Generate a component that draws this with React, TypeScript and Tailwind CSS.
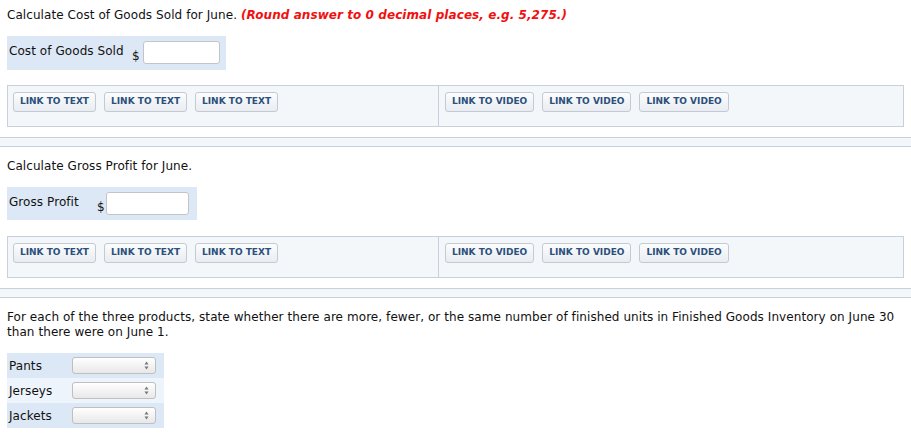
const font = { fontFamily: '"DejaVu Sans", Verdana, sans-serif' };

function LinkButton({ label }: { label: string }) {
  return (
    <div className="h-[20px] px-[6px] flex items-center rounded-[3px] border border-[#c3cad3] bg-gradient-to-b from-[#fbfcfd] to-[#e9edf1] text-[9px] tracking-normal font-bold text-[#2c4f7c] whitespace-nowrap">
      {label}
    </div>
  );
}

function LinksPanel({ top }: { top: string }) {
  return (
    <div className={`${top} h-[42px] w-[897px] flex border border-[#c7d0dc] bg-[#f4f7fa]`}>
      <div className="w-[431px] border-r border-[#c7d0dc] pl-[5px] pt-[6px] flex gap-[8px] items-start">
        <LinkButton label="LINK TO TEXT" />
        <LinkButton label="LINK TO TEXT" />
        <LinkButton label="LINK TO TEXT" />
      </div>
      <div className="flex-1 pl-[6px] pt-[6px] flex gap-[8px] items-start">
        <LinkButton label="LINK TO VIDEO" />
        <LinkButton label="LINK TO VIDEO" />
        <LinkButton label="LINK TO VIDEO" />
      </div>
    </div>
  );
}

function Separator() {
  return <div className="mt-[10px] h-[10px] w-full border-y border-[#c7d0dc] bg-[#f4f7fa]" />;
}

function Select() {
  return (
    <div className="h-[17px] w-[84px] rounded-[3px] border border-[#bfbfbf] bg-gradient-to-b from-white to-[#e8e8e8] flex items-center justify-end pr-[6px]">
      <svg width="5" height="9" viewBox="0 0 5 9">
        <path d="M2.5 0.5 L4.5 3.5 L0.5 3.5 Z" fill="#777" />
        <path d="M2.5 8.5 L4.5 5.5 L0.5 5.5 Z" fill="#777" />
      </svg>
    </div>
  );
}

export default function App() {
  const rows = [
    { name: "Pants", bg: "bg-[#dce8f5]" },
    { name: "Jerseys", bg: "bg-[#eef4fb]" },
    { name: "Jackets", bg: "bg-[#dce8f5]" },
  ];
  return (
    <div className="w-[911px] h-[437px] bg-white text-[12px] tracking-[0.07px] text-[#111] overflow-hidden" style={font}>
      <div className="pl-[7px]">
        <div className="pt-[7px] leading-[16px]">
          Calculate Cost of Goods Sold for June.{" "}
          <span className="text-[#f01010] font-bold italic">(Round answer to 0 decimal places, e.g. 5,275.)</span>
        </div>
        <div className="mt-[13px] h-[34px] w-[219px] bg-[#dce8f5] flex items-start pl-[2px]">
          <div className="mt-[7px] leading-[16px] w-[123px]">Cost of Goods Sold</div>
          <div className="mt-[13px] leading-[14px] w-[11px]">$</div>
          <input className="mt-[5px] h-[23px] w-[77px] rounded-[3px] border border-[#c4c4c4] bg-white" />
        </div>
        <LinksPanel top="mt-[15px]" />
      </div>
      <Separator />
      <div className="pl-[7px]">
        <div className="mt-[11px] leading-[16px]">Calculate Gross Profit for June.</div>
        <div className="mt-[13px] h-[33px] w-[190px] bg-[#dce8f5] flex items-start pl-[2px]">
          <div className="mt-[7px] leading-[16px] w-[88px]">Gross Profit</div>
          <div className="mt-[13px] leading-[14px] w-[9px]">$</div>
          <input className="mt-[5px] h-[23px] w-[83px] rounded-[3px] border border-[#c4c4c4] bg-white" />
        </div>
        <LinksPanel top="mt-[16px]" />
      </div>
      <Separator />
      <div className="pl-[7px]">
        <div className="mt-[12px] leading-[15px]">
          For each of the three products, state whether there are more, fewer, or the same number of finished units in Finished Goods Inventory on June 30
          <br />
          than there were on June 1.
        </div>
        <div className="mt-[13px] w-[157px]">
          {rows.map((r) => (
            <div key={r.name} className={`h-[25px] flex items-center pl-[2px] ${r.bg}`}>
              <div className="w-[63px]">{r.name}</div>
              <Select />
            </div>
          ))}
        </div>
      </div>
    </div>
  );
}
